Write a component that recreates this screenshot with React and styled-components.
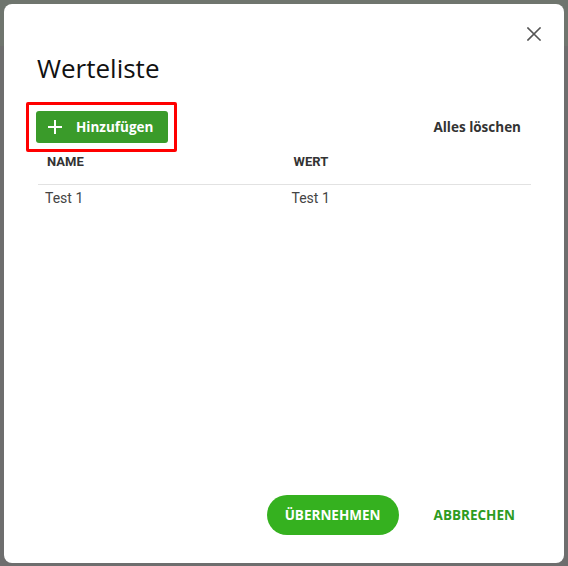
import React from 'react'
import styled, { createGlobalStyle } from 'styled-components'

const GlobalStyle = createGlobalStyle`
    html, body {
        margin: 0;
        padding: 0;
        background: #6e6e6e;
    }
    * {
        box-sizing: border-box;
    }
`

const rows = [{ name: 'Test 1', value: 'Test 1' }]

export default function App() {
    return (
        <>
            <GlobalStyle />
            <Backdrop>
                <Dialog>
                    <CloseRow>
                        <CloseButton aria-label="Schließen">
                            <svg width="14" height="14" viewBox="0 0 14 14">
                                <path d="M1 1 L13 13 M13 1 L1 13" stroke="#555" strokeWidth="1.6" strokeLinecap="square" />
                            </svg>
                        </CloseButton>
                    </CloseRow>
                    <Title>Werteliste</Title>
                    <Toolbar>
                        <Highlight>
                            <AddButton>
                                <svg width="14" height="14" viewBox="0 0 14 14">
                                    <path d="M7 0 V14 M0 7 H14" stroke="#fff" strokeWidth="2" />
                                </svg>
                                <span>Hinzufügen</span>
                            </AddButton>
                        </Highlight>
                        <ClearButton>Alles löschen</ClearButton>
                    </Toolbar>
                    <Table>
                        <HeadRow>
                            <HeadCell>NAME</HeadCell>
                            <HeadCell>WERT</HeadCell>
                        </HeadRow>
                        {rows.map((r, i) => (
                            <Row key={i}>
                                <Cell>{r.name}</Cell>
                                <Cell>{r.value}</Cell>
                            </Row>
                        ))}
                    </Table>
                    <Footer>
                        <PrimaryButton>ÜBERNEHMEN</PrimaryButton>
                        <TextButton>ABBRECHEN</TextButton>
                    </Footer>
                </Dialog>
            </Backdrop>
        </>
    )
}

const Backdrop = styled.div`
    width: 568px;
    height: 566px;
    padding: 4px 4px 3px 4px;
    background: linear-gradient(#6f756e 0 46px, #6e6e6e 46px);
`

const Dialog = styled.div`
    width: 560px;
    height: 559px;
    background: #fff;
    border-radius: 8px;
    display: flex;
    flex-direction: column;
    padding: 18px 33px 28px 34px;
    font-family: "Open Sans", "Noto Sans", sans-serif;
`

const CloseRow = styled.div`
    display: flex;
    justify-content: flex-end;
    margin-right: -15px;
`

const CloseButton = styled.button`
    width: 24px;
    height: 24px;
    border: none;
    background: none;
    padding: 0;
    display: flex;
    align-items: center;
    justify-content: center;
    cursor: pointer;
`

const Title = styled.h2`
    margin: 6px 0 0 -1px;
    font-size: 26px;
    line-height: 32px;
    font-weight: 400;
    color: #111;
`

const Toolbar = styled.div`
    display: flex;
    align-items: center;
    justify-content: space-between;
    margin: 18px 0 0 -12px;
`

const Highlight = styled.div`
    border: 3px solid #f00;
    border-radius: 2px;
    padding: 6px 6px 6px 7px;
`

const AddButton = styled.button`
    display: flex;
    align-items: center;
    gap: 14px;
    width: 132px;
    height: 32px;
    padding: 0 12px;
    border: none;
    border-radius: 3px;
    background: #3a9b2a;
    color: #fff;
    font-family: "Open Sans", sans-serif;
    font-weight: 700;
    font-size: 13.5px;
    cursor: pointer;
`

const ClearButton = styled.button`
    border: none;
    background: none;
    padding: 8px 10px;
    font-family: "Open Sans", sans-serif;
    font-weight: 700;
    font-size: 13.5px;
    color: #333;
    cursor: pointer;
`

const Table = styled.div`
    flex: 1;
`

const HeadRow = styled.div`
    display: grid;
    grid-template-columns: 1fr 1fr;
    border-bottom: 1px solid #e2e2e2;
`

const HeadCell = styled.div`
    padding: 2px 9px 14px;
    font-family: Roboto, sans-serif;
    font-weight: 700;
    font-size: 13px;
    line-height: 16px;
    color: #333;
`

const Row = styled.div`
    display: grid;
    grid-template-columns: 1fr 1fr;
`

const Cell = styled.div`
    padding: 5px 7px;
    font-family: Roboto, sans-serif;
    font-size: 14px;
    line-height: 16px;
    color: #444;
`

const Footer = styled.div`
    display: flex;
    justify-content: flex-end;
    align-items: center;
    gap: 19px;
`

const PrimaryButton = styled.button`
    width: 132px;
    height: 40px;
    border: none;
    border-radius: 20px;
    background: #35b11f;
    color: #fff;
    font-family: "Open Sans", sans-serif;
    font-weight: 700;
    font-size: 13.5px;
    cursor: pointer;
`

const TextButton = styled.button`
    height: 40px;
    padding: 0 16px;
    border: none;
    background: none;
    color: #2e9b1f;
    font-family: "Open Sans", sans-serif;
    font-weight: 700;
    font-size: 13.5px;
    cursor: pointer;
`
